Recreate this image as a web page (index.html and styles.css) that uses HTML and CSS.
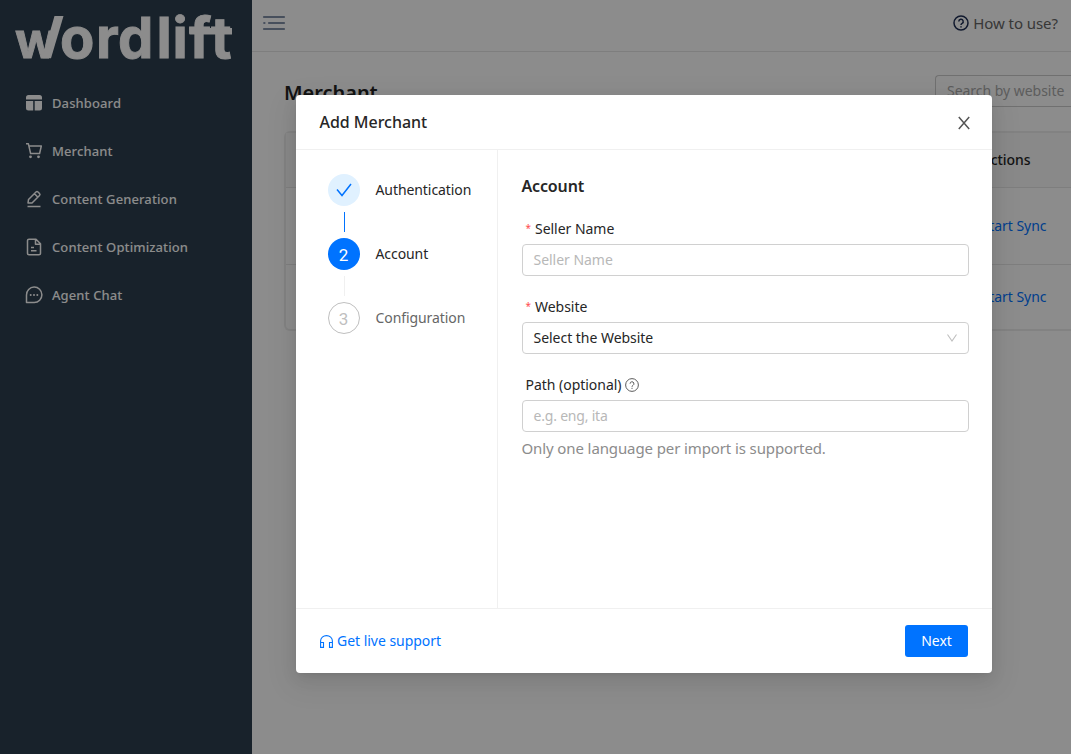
FILE: index.html
```html
<!DOCTYPE html>
<html lang="en">
<head>
<meta charset="utf-8">
<title>Add Merchant</title>
<link rel="stylesheet" href="styles.css">
</head>
<body>
<div class="app">
  <aside class="sidebar">
    <svg class="logo" viewBox="0 0 220 50" width="220" height="50" role="img" aria-label="wordlift">
      <text class="logo-text" y="46" x="0 45 81 103 141.500 157.500 174 196"><tspan class="logo-w">w</tspan>ordlift</text>
      <path d="M27.500 46.200h8.500L48.500 4h-9z" fill="#fff"/>
      <path d="M174.500 16h42.500v6.500h-42.500z" fill="#fff"/>
    </svg>
    <nav class="menu">
      <a class="item"><svg class="icon" viewBox="0 0 16 16"><path fill="currentColor" d="M2.500 0h11A2.500 2.500 0 0 1 16 2.500V4.500H0v-2A2.500 2.500 0 0 1 2.500 0zM0 6h7.200v9.500H2.500A2.500 2.500 0 0 1 0 13zM8.700 6H16v7a2.500 2.500 0 0 1-2.500 2.500H8.700z"/></svg>Dashboard</a>
      <a class="item"><svg class="icon line" viewBox="0 0 16 16"><path d="M0 .8h2.400L4.600 10.500h9L15.300 3H3"/><circle class="dot" cx="4.500" cy="13.800" r="1.400"/><circle class="dot" cx="12.500" cy="13.800" r="1.400"/></svg>Merchant</a>
      <a class="item"><svg class="icon line" viewBox="0 0 16 16"><path d="M1.500 15.600h13M2 12l.5-3.500L10 1q1-1 2 0l1.500 1.500q1 1 0 2L6 12zM8.500 2.800l3.500 3.500"/></svg>Content Generation</a>
      <a class="item"><svg class="icon line" viewBox="0 0 16 16"><path d="M10 .2H3Q1.500.2 1.500 1.500v13q0 1.200 1.500 1.200h10q1.500 0 1.500-1.200V4.800zM9.500.5v4.800h4.800M5 8.500h3M5 11.800h5.500"/></svg>Content Optimization</a>
      <a class="item"><svg class="icon line" viewBox="0 0 16 16"><path d="M.5 15.500V8A7.700 7.700 0 1 1 8.200 15.500z"/><circle class="dot" cx="4.700" cy="8" r="1"/><circle class="dot" cx="8" cy="8" r="1"/><circle class="dot" cx="11.300" cy="8" r="1"/></svg>Agent Chat</a>
    </nav>
  </aside>
  <div class="main">
    <header class="topbar">
      <svg class="burger" viewBox="0 0 22 14" width="22" height="14"><path d="M1 1h20M6 7h15M1.200 7h.3M1 13h20"/></svg>
      <a class="help"><svg class="help-icon" viewBox="0 0 16 16" width="16" height="16"><circle cx="8" cy="8" r="7"/><path d="M5.800 6.500a2.200 2.200 0 1 1 3.300 1.900Q8 9 8 10M8 11.200v1.300"/></svg>How to use?</a>
    </header>
    <section class="content">
      <div class="heading">
        <h1 class="title">Merchant</h1>
        <div class="search">Search by website</div>
      </div>
      <div class="table">
        <div class="row head"><span>Actions</span></div>
        <div class="row first"><a>Start Sync</a></div>
        <div class="row"><a>Start Sync</a></div>
      </div>
    </section>
  </div>
</div>
<div class="mask">
  <div class="modal">
    <header class="modal-head">
      <h2 class="modal-title">Add Merchant</h2>
      <svg class="close" viewBox="0 0 12 14" width="12" height="14"><path d="M.8 1l10.400 12M11.200 1L.8 13"/></svg>
    </header>
    <div class="modal-body">
      <ol class="steps">
        <li class="step done"><span class="badge"><svg viewBox="0 0 16 14" width="16" height="14"><path d="M1 6.500L6 12.500L15 1"/></svg></span>Authentication</li>
        <li class="step active"><span class="badge">2</span>Account</li>
        <li class="step wait"><span class="badge">3</span>Configuration</li>
      </ol>
      <div class="form">
        <h3 class="form-title">Account</h3>
        <label class="label"><span class="req">*</span>Seller Name</label>
        <div class="field hint">Seller Name</div>
        <label class="label"><span class="req">*</span>Website</label>
        <div class="field">Select the Website<svg class="chevron" viewBox="0 0 10 8" width="10" height="8"><path d="M.5.500L5 7L9.500.500"/></svg></div>
        <label class="label">Path (optional)<svg class="tip" viewBox="0 0 16 16" width="14" height="14"><circle cx="8" cy="8" r="7.300"/><path d="M5.800 6.500a2.200 2.200 0 1 1 3.300 1.900Q8 9 8 10M8 11.200v1.300"/></svg></label>
        <div class="field hint path">e.g. eng, ita</div>
        <p class="note">Only one language per import is supported.</p>
      </div>
    </div>
    <footer class="modal-foot">
      <a class="support"><svg viewBox="0 0 13 13" width="13" height="13"><path d="M.6 8V6a5.900 5.400 0 0 1 11.800 0v2M.6 7.500h2.900v4.900H.6zM9.500 7.500h2.900v4.900H9.500z"/></svg>Get live support</a>
      <button class="next">Next</button>
    </footer>
  </div>
</div>
</body>
</html>
```

FILE: styles.css
```css
* { box-sizing: border-box; }
body {
  margin: 0;
  overflow: hidden;
  font: 14px/22px "Noto Sans", sans-serif;
  letter-spacing: -.03px;
  color: #262626;
}
svg { flex: none; }
h1, h2, h3, p, ol { margin: 0; padding: 0; }
.app { display: flex; height: 754px; }

.sidebar { width: 252px; flex: none; background: #2d3f4f; color: #fff; }
.logo { display: block; margin: 12px 0 0 15px; overflow: visible; }
.logo-text { font: 700 56px "Inter", sans-serif; letter-spacing: 0; fill: #fff; stroke: #fff; stroke-width: .9; }
.logo-w { font-size: 50px; }
.menu { display: flex; flex-direction: column; padding-top: 17px; }
.item {
  display: flex;
  align-items: center;
  gap: 10px;
  height: 48px;
  padding-left: 26px;
  font: 500 13px/20px "Noto Sans", sans-serif;
  letter-spacing: .1px;
}
.icon { width: 16px; height: 16px; overflow: visible; }
.line { fill: none; stroke: currentColor; stroke-width: 1.5; stroke-linejoin: round; }
.dot { fill: currentColor; stroke: none; }

.main { flex: 1; min-width: 0; background: #fff; }
.topbar {
  display: flex;
  justify-content: space-between;
  align-items: center;
  height: 52px;
  padding: 0 13px 5px 11px;
  border-bottom: 1px solid #e6e6e6;
}
.burger { fill: none; stroke: #8190a8; stroke-width: 2.2; stroke-linecap: round; overflow: visible; }
.help { display: flex; align-items: center; gap: 4px; font-size: 15px; letter-spacing: -.05px; color: #666; }
.help-icon { fill: none; stroke: #1f2f55; stroke-width: 1.5; }
.content { padding: 23px 0 0 32px; }
.heading { display: flex; justify-content: space-between; height: 57px; }
.title { font: 600 20px/35px "Noto Sans", sans-serif; }
.search {
  width: 136px;
  height: 32px;
  padding: 4px 11px;
  border: 1px solid #ccc;
  border-right: 0;
  border-radius: 4px 0 0 4px;
  color: #aaa;
  white-space: nowrap;
}
.table { border: 2px solid #ededed; border-right: 0; border-radius: 6px 0 0 6px; height: 200px; margin-top: -1px; }
.row { display: flex; align-items: center; height: 65px; padding-left: 695.5px; white-space: nowrap; }
.row + .row { border-top: 1px solid #e6e6e6; }
.head { height: 54px; background: #fafafa; font-weight: 500; }
.first { height: 77px; }
.row a { color: #0073ff; }

.mask { position: absolute; inset: 0; background: rgba(0, 0, 0, .45); padding: 95px 0 0 296px; }
.modal {
  display: flex;
  flex-direction: column;
  width: 696px;
  height: 578px;
  background: #fff;
  border-radius: 4px;
  box-shadow: 0 3px 6px -4px rgba(0, 0, 0, .12), 0 6px 16px rgba(0, 0, 0, .08), 0 9px 28px 8px rgba(0, 0, 0, .05);
}
.modal-head {
  display: flex;
  justify-content: space-between;
  align-items: center;
  height: 55px;
  padding: 0 22px 0 23.5px;
  border-bottom: 1px solid #f0f0f0;
}
.modal-title { font: 500 16px/22px "Noto Sans", sans-serif; }
.close { margin-top: 2px; fill: none; stroke: #555; stroke-width: 1.5; }
.modal-body { display: flex; flex: 1; }
.steps { width: 202px; padding: 24px 0 0 32px; border-right: 1px solid #f0f0f0; list-style: none; }
.step {
  display: grid;
  grid-template-columns: 32px 1fr;
  grid-template-rows: 32px 20px;
  column-gap: 15.5px;
  row-gap: 6px;
  height: 64px;
  line-height: 32px;
  letter-spacing: -.08px;
}
.step:not(:last-child)::after { content: ""; width: 1px; margin-left: 16px; background: #f0f0f0; }
.step.done::after { background: #0073ff; }
.badge {
  display: flex;
  align-items: center;
  justify-content: center;
  border-radius: 50%;
  font: 400 17px/32px "Roboto", sans-serif;
}
.active .badge, .wait .badge { padding: 2px 1px 0 0; }
.done .badge { background: #e0f1ff; }
.done svg { fill: none; stroke: #0073ff; stroke-width: 1.5; }
.active .badge { background: #0073ff; color: #fff; }
.wait { color: #666; }
.wait .badge { border: 1px solid #bfbfbf; color: #bfbfbf; }
.form { flex: 1; padding: 25px 23px 0 24px; }
.form-title { margin: 0 0 20px -.5px; font: 600 16px/22px "Noto Sans", sans-serif; letter-spacing: -.15px; }
.label { display: flex; align-items: center; height: 27px; padding: 0 0 3px 3.5px; }
.req { width: 9.5px; padding-bottom: 2px; color: #ff4d4f; font-size: 10px; }
.tip { margin-left: 4px; fill: none; stroke: #555; stroke-width: 1.1; }
.field {
  display: flex;
  justify-content: space-between;
  align-items: center;
  height: 32px;
  margin-bottom: 19px;
  padding: 0 11px 0 10.5px;
  border: 1px solid #d0d0d0;
  border-radius: 4px;
}
.hint { color: #b8b8b8; }
.path { letter-spacing: -.2px; }
.chevron { fill: none; stroke: #bfbfbf; stroke-width: 1.1; }
.note { margin: -15px 0 0 -.5px; font-size: 15px; line-height: 24px; letter-spacing: -.11px; color: #8c8c8c; }
.modal-foot {
  display: flex;
  justify-content: space-between;
  align-items: center;
  height: 65px;
  padding: 0 24px;
  border-top: 1px solid #f0f0f0;
}
.support { display: flex; align-items: center; gap: 4px; color: #0073ff; }
.support svg { fill: none; stroke: currentColor; stroke-width: 1.1; }
.next {
  width: 63px;
  height: 32px;
  border: 0;
  border-radius: 3px;
  background: #0073ff;
  color: #fff;
  font: 14px/22px "Noto Sans", sans-serif;
}
```
